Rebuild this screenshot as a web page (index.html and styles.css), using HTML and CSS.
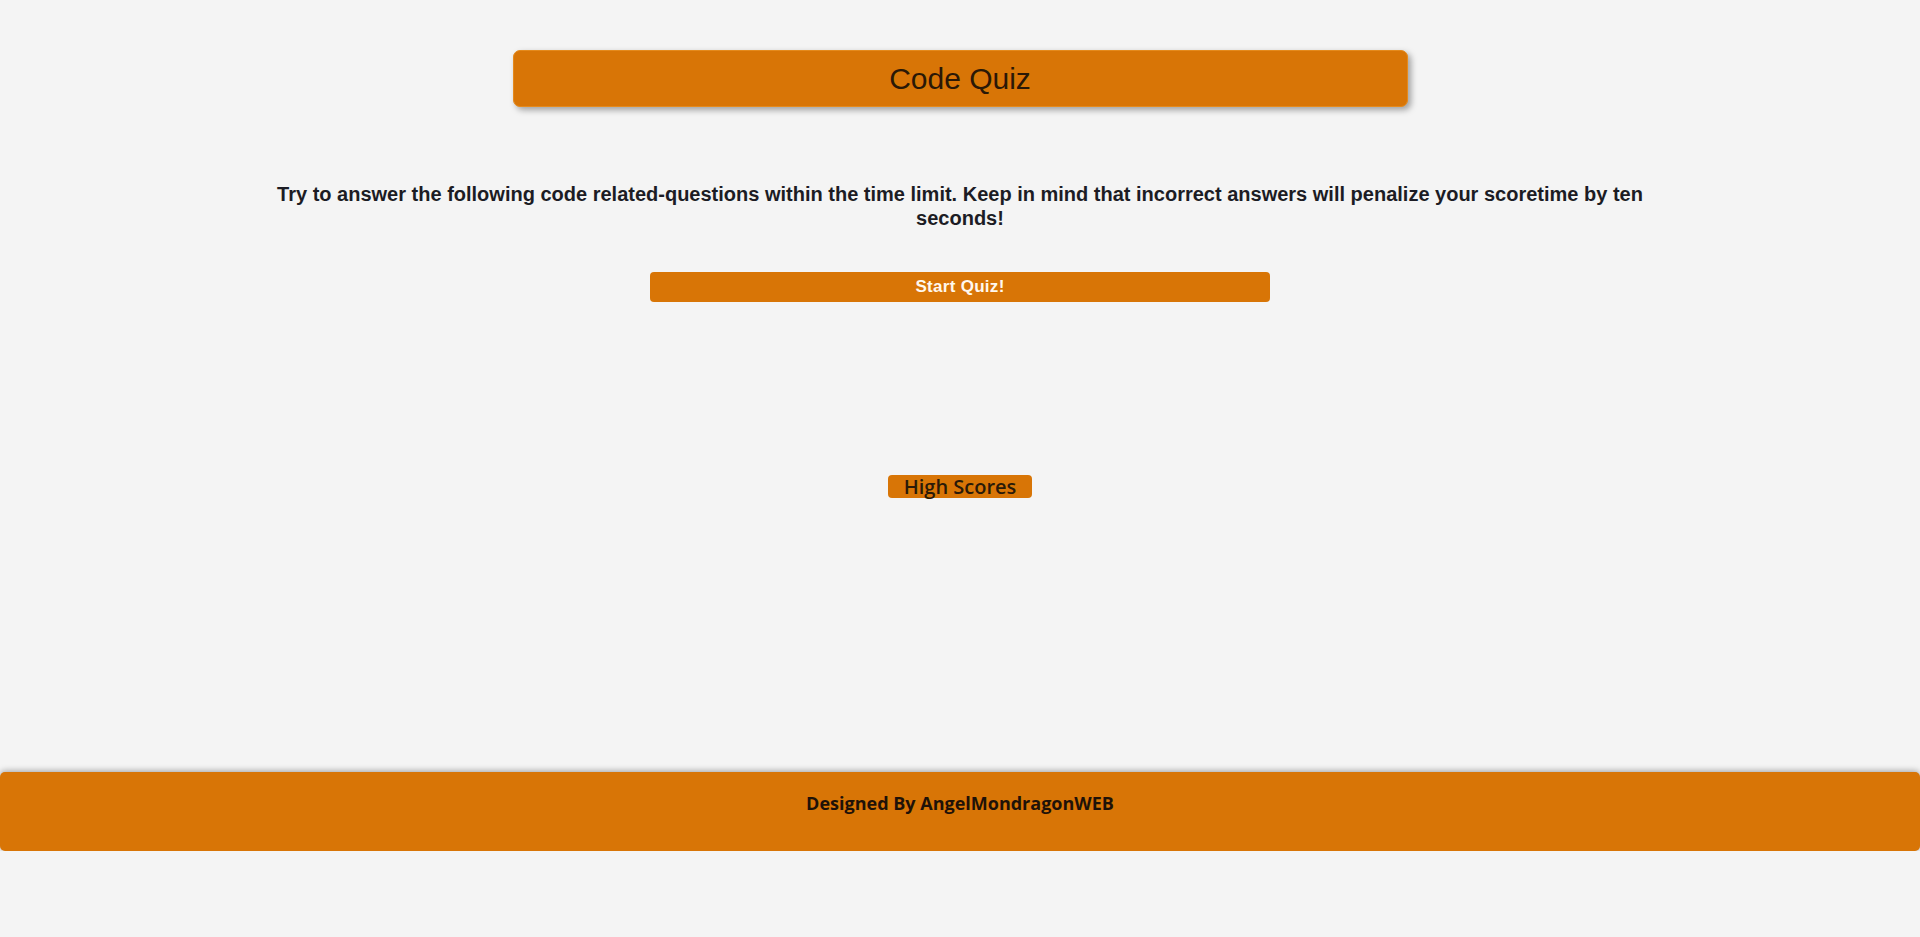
FILE: index.html
```html
<!DOCTYPE html>
<html lang="en">
<head>
<meta charset="utf-8">
<title>Code Quiz</title>
<link rel="stylesheet" href="styles.css">
</head>
<body>
<header class="site-header">
  <h1 class="title">Code Quiz</h1>
</header>
<main class="quiz">
  <p class="intro">Try to answer the following code related-questions within the time limit. Keep in mind that incorrect answers will penalize your scoretime by ten seconds!</p>
  <button class="start-btn" type="button">Start Quiz!</button>
  <button class="scores-btn" type="button">High Scores</button>
</main>
<footer class="site-footer">
  <p class="credit">Designed By AngelMondragonWEB</p>
</footer>
</body>
</html>
```

FILE: styles.css
```css
html, body {
  margin: 0;
  padding: 0;
}
body {
  background: #f4f4f4;
  font-family: "Liberation Sans", Arial, sans-serif;
  color: #1c1c24;
}
.site-header {
  width: 895px;
  height: 57px;
  margin: 50px auto 0;
  background: #d87506;
  border: 1px solid #e58a1c;
  box-sizing: border-box;
  border-radius: 7px;
  box-shadow: 3px 3px 6px rgba(0, 0, 0, 0.35);
  display: flex;
  align-items: center;
  justify-content: center;
}
.title {
  margin: 0;
  font-family: "Liberation Sans", Arial, sans-serif;
  font-weight: normal;
  font-size: 30px;
  line-height: 1;
  color: #2a1806;
}
.quiz {
  display: flex;
  flex-direction: column;
  align-items: center;
}
.intro {
  max-width: 1400px;
  margin: 75px auto 0;
  text-align: center;
  font-weight: bold;
  font-size: 20px;
  line-height: 24px;
}
.start-btn {
  margin-top: 42px;
  width: 620px;
  height: 30px;
  border: none;
  border-radius: 4px;
  background: #d87506;
  color: #fff8ee;
  font-family: "Liberation Sans", Arial, sans-serif;
  font-weight: bold;
  font-size: 17px;
  letter-spacing: 0.3px;
  padding: 0;
  cursor: pointer;
}
.scores-btn {
  margin-top: 173px;
  height: 23px;
  width: 144px;
  padding: 0;
  border: none;
  border-radius: 4px;
  background: #d87506;
  color: #2a1a08;
  font-family: "Open Sans", "DejaVu Sans", sans-serif;
  font-weight: 600;
  font-size: 20px;
  line-height: 23px;
  cursor: pointer;
}
.site-footer {
  margin-top: 274px;
  height: 79px;
  box-sizing: border-box;
  padding-top: 21px;
  background: #d87506;
  border-radius: 5px;
  box-shadow: 0 -1px 6px rgba(0, 0, 0, 0.35);
  text-align: center;
}
.credit {
  margin: 0;
  font-family: "Open Sans", "DejaVu Sans", sans-serif;
  font-weight: bold;
  font-size: 18px;
  line-height: 21px;
  color: #1f1208;
}
```
